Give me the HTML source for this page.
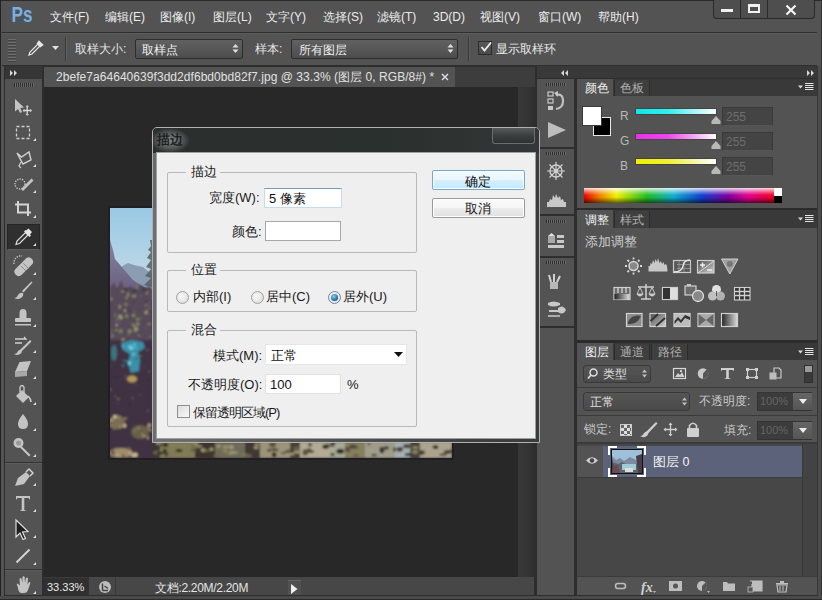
<!DOCTYPE html>
<html><head><meta charset="utf-8">
<style>
*{margin:0;padding:0;box-sizing:border-box}
html,body{width:822px;height:600px;overflow:hidden;background:#535353;font-family:"Liberation Sans",sans-serif;font-size:12px;color:#e8e8e8}
.a{position:absolute}
.t{position:absolute;white-space:nowrap;line-height:1}
</style></head><body>
<!-- window frame -->
<div class="a" style="left:0;top:0;width:822px;height:1px;background:#2a2a2a"></div>
<div class="a" style="left:0;top:0;width:1px;height:600px;background:#222"></div>
<div class="a" style="left:821px;top:0;width:1px;height:600px;background:#333"></div>
<div class="a" style="left:0;top:596px;width:822px;height:3px;background:#4a4a4a"></div><div class="a" style="left:0;top:599px;width:822px;height:1px;background:#2a2a2a"></div>

<div class="a" style="left:817px;top:66px;width:1px;height:530px;background:#353535"></div><div class="a" style="left:818px;top:66px;width:3px;height:530px;background:#4c4c4c"></div>
<!-- menu bar -->
<div class="a" style="left:1px;top:1px;width:816px;height:31px;background:#535353"></div>
<div class="a" style="left:2px;top:32px;width:815px;height:1px;background:#2e2e2e"></div>

<!-- options bar -->
<div class="a" style="left:2px;top:33px;width:815px;height:32px;background:#535353;border-top:1px solid #5d5d5d"></div>
<div class="a" style="left:2px;top:65px;width:815px;height:1px;background:#2e2e2e"></div>


<!-- menu content -->
<div class="a" style="left:11px;top:7px;width:22px;height:17px;background:#4c545c"></div>
<svg class="a" style="left:0;top:0" width="40" height="30" viewBox="0 0 40 30"><text x="11.5" y="22.2" font-family="Liberation Sans" font-size="22" font-weight="bold" fill="#7eaedb" textLength="21" lengthAdjust="spacingAndGlyphs">Ps</text></svg>
<div class="t" style="left:50px;top:11px;color:#ececec">文件(F)</div>
<div class="t" style="left:105px;top:11px;color:#ececec">编辑(E)</div>
<div class="t" style="left:160px;top:11px;color:#ececec">图像(I)</div>
<div class="t" style="left:213px;top:11px;color:#ececec">图层(L)</div>
<div class="t" style="left:266px;top:11px;color:#ececec">文字(Y)</div>
<div class="t" style="left:323px;top:11px;color:#ececec">选择(S)</div>
<div class="t" style="left:377px;top:11px;color:#ececec">滤镜(T)</div>
<div class="t" style="left:433px;top:11px;color:#ececec">3D(D)</div>
<div class="t" style="left:480px;top:11px;color:#ececec">视图(V)</div>
<div class="t" style="left:538px;top:11px;color:#ececec">窗口(W)</div>
<div class="t" style="left:598px;top:11px;color:#ececec">帮助(H)</div>
<!-- window buttons -->
<div class="a" style="left:713px;top:0;width:102px;height:19px;background:#4e4e4e;border:1px solid #2a2a2a;border-top:0;border-radius:0 0 4px 4px"></div>
<div class="a" style="left:740px;top:0;width:1px;height:18px;background:#2a2a2a"></div>
<div class="a" style="left:767px;top:0;width:1px;height:18px;background:#2a2a2a"></div>
<div class="a" style="left:721px;top:9px;width:12px;height:3px;background:#f0f0f0"></div>
<div class="a" style="left:748px;top:4px;width:12px;height:9px;border:2px solid #f0f0f0;border-top-width:3px"></div>
<svg class="a" style="left:783px;top:4px" width="16" height="12" viewBox="0 0 16 12"><path d="M3.5 1.5 L12.5 10.5 M12.5 1.5 L3.5 10.5" stroke="#f4f4f4" stroke-width="2.2"/></svg>

<!-- options content -->
<div class="a" style="left:8px;top:39px;width:8px;height:23px;background:repeating-linear-gradient(#6e6e6e 0 1px,#444 1px 2px,#535353 2px 3px)"></div>
<svg class="a" style="left:26px;top:38px" width="20" height="20" viewBox="0 0 20 20"><path d="M3 17 L4 14 L12 6 L14 8 L6 16 Z" fill="none" stroke="#e8e8e8" stroke-width="1.2"/><path d="M11 5 L15 9 M13 3.5 L16.5 7 L15 8 L12 5 Z" stroke="#e8e8e8" stroke-width="1.6" fill="#e8e8e8"/></svg>
<svg class="a" style="left:52px;top:46px" width="7" height="4" viewBox="0 0 7 4"><path d="M0 0 L7 0 L3.5 4Z" fill="#e0e0e0"/></svg>
<div class="a" style="left:65px;top:37px;width:1px;height:24px;background:#3a3a3a"></div>
<div class="a" style="left:66px;top:37px;width:1px;height:24px;background:#5e5e5e"></div>
<div class="t" style="left:75px;top:43px;color:#e4e4e4">取样大小:</div>
<div class="a" style="left:135px;top:39px;width:108px;height:20px;background:linear-gradient(#616161,#4d4d4d);border:1px solid #2d2d2d;border-radius:2px"></div>
<div class="t" style="left:142px;top:44px;color:#f0f0f0">取样点</div>
<svg class="a" style="left:232px;top:43px" width="7" height="11" viewBox="0 0 7 11"><path d="M0.5 4.5 L3.5 1 L6.5 4.5Z M0.5 6.5 L3.5 10 L6.5 6.5Z" fill="#e0e0e0"/></svg>
<div class="t" style="left:255px;top:43px;color:#e4e4e4">样本:</div>
<div class="a" style="left:291px;top:39px;width:167px;height:20px;background:linear-gradient(#616161,#4d4d4d);border:1px solid #2d2d2d;border-radius:2px"></div>
<div class="t" style="left:299px;top:44px;color:#f0f0f0">所有图层</div>
<svg class="a" style="left:447px;top:43px" width="7" height="11" viewBox="0 0 7 11"><path d="M0.5 4.5 L3.5 1 L6.5 4.5Z M0.5 6.5 L3.5 10 L6.5 6.5Z" fill="#e0e0e0"/></svg>
<div class="a" style="left:468px;top:37px;width:1px;height:24px;background:#3a3a3a"></div>
<div class="a" style="left:469px;top:37px;width:1px;height:24px;background:#5e5e5e"></div>
<div class="a" style="left:478px;top:41px;width:14px;height:14px;background:linear-gradient(#5a5a5a,#4a4a4a);border:1px solid #2d2d2d"></div>
<svg class="a" style="left:479px;top:40px" width="14" height="14" viewBox="0 0 14 14"><path d="M2.5 7 L5.5 10.5 L12 2.5" fill="none" stroke="#eeeeee" stroke-width="1.8"/></svg>
<div class="t" style="left:496px;top:43px;color:#e8e8e8">显示取样环</div>

<!-- main area bg -->
<div class="a" style="left:4px;top:66px;width:813px;height:530px;background:#2d2d2d"></div>

<!-- tools panel -->
<div class="a" style="left:5px;top:67px;width:37px;height:528px;background:#535353"></div>
<div class="a" style="left:5px;top:66px;width:37px;height:13px;background:#363636"></div>


<!-- tools content -->
<svg class="a" style="left:5px;top:67px;width:37px;height:12px" viewBox="0 0 37 12"><path d="M5 3 L8 6 L5 9Z M9 3 L12 6 L9 9Z" fill="#d8d8d8"/></svg>
<div class="a" style="left:14px;top:83px;width:20px;height:4px;background:repeating-linear-gradient(90deg,#2e2e2e 0 1px,#6a6a6a 1px 2px)"></div>
<div class="a" style="left:7px;top:224px;width:33px;height:26px;background:#2f2f2f;border:1px solid #262626;border-bottom-color:#5e5e5e"></div>
<div class="a" style="left:5px;top:462px;width:37px;height:1px;background:#333"></div>
<div class="a" style="left:5px;top:463px;width:37px;height:1px;background:#5d5d5d"></div>
<div class="a" style="left:5px;top:569px;width:37px;height:1px;background:#333"></div>
<div class="a" style="left:5px;top:570px;width:37px;height:1px;background:#5d5d5d"></div>
<svg class="a" style="left:0;top:0" width="50" height="600" viewBox="0 0 50 600">
<g fill="#c4c4c4" stroke="none">
<path d="M15 99 L15 111.5 L18 109 L20 113 L22 112 L20.3 108 L24 107.5Z"/>
<path d="M23 110.5 L31.5 110.5 M27.2 106 L27.2 115" stroke="#d8d8d8" stroke-width="1.3"/>
<path d="M25.5 107 L27.2 105 L29 107Z M25.5 114 L27.2 116 L29 114Z M24.5 108.8 L22.5 110.5 L24.5 112.2Z M30 108.8 L32 110.5 L30 112.2Z"/>
<rect x="16.5" y="126.5" width="13" height="12" fill="none" stroke="#d0d0d0" stroke-width="1.3" stroke-dasharray="3 2"/>
<path d="M17 153 L21.5 157 L29 152 L31 160 L23 164 L17 153Z" fill="none" stroke="#d0d0d0" stroke-width="1.4"/>
<path d="M21 162 L19 166 L21 168" fill="none" stroke="#d0d0d0" stroke-width="1.2"/>
<circle cx="20" cy="184" r="5" fill="none" stroke="#cfcfcf" stroke-width="1.3" stroke-dasharray="1.3 1.2"/>
<path d="M21 189 L31.5 178.5 L33.5 180.5 L23 191Z"/>
<path d="M18 201 L18 212.5 L31 212.5 M15 204.5 L28 204.5 L28 216" fill="none" stroke="#d4d4d4" stroke-width="2"/>
<path d="M16 244.5 L17 241 L25.5 232.5 L28 235 L19.5 243.5Z" fill="none" stroke="#e0e0e0" stroke-width="1.2"/>
<path d="M24 231.5 L29.5 237 L31 235.5 L30 234.5 L32 232 L28.5 228.5 L26 230.5 L25.5 230Z" fill="#e4e4e4"/>
<path d="M15.5 269 L26 258.5 Q29 256 32 259 Q34.5 262 32 264.5 L21.5 275 Q18.5 277.5 15.5 274.5 Q13 271.5 15.5 269Z"/><path d="M21 266 L26 271 M23.5 263.5 L28.5 268.5" stroke="#8a8a8a" stroke-width="1"/>
<path d="M14 264 A7 7 0 0 1 22 256" fill="none" stroke="#cfcfcf" stroke-width="1.3" stroke-dasharray="1.3 1.2"/>
<g transform="translate(0 2)"><path d="M22 289 L31.5 279.5 L32.5 280.5 L23.5 290.5Z"/>
<path d="M14 296 Q17 296 18 293 Q20 290 23 291 Q24 294 21 296 Q18 298 14 296Z"/></g>
<g transform="translate(0 6)"><rect x="15" y="312" width="16" height="4" rx="1"/>
<path d="M19.5 312 L19.5 307 Q19.5 303 23 303 Q26.5 303 26.5 307 L26.5 312Z"/>
<rect x="15" y="318" width="16" height="1.5"/></g>
<g transform="translate(0 1)"><path d="M19 350 L30 339 L31.5 340.5 L21 351Z"/>
<path d="M14 353 Q17 353 18 350 Q20 348 22 349 Q22 352 20 353 Q17 355 14 353Z"/>
<path d="M15 338 L26 338 L24 336 M15 342 L22 342" fill="none" stroke="#cfcfcf" stroke-width="1.3"/></g>
<path d="M15 372 L19.5 362 L31 361 L27 371Z"/>
<path d="M15 372 L27 371 L27 376 L15 377Z" fill="#a8a8a8"/>
<g transform="translate(0 2)"><path d="M16 394 L22 388 L29 395 L23 401Z"/>
<path d="M20 390 L20 385 Q22 382 24 385 L24 391" fill="none" stroke="#cfcfcf" stroke-width="1.3"/>
<path d="M28 394 Q31 397 31 400" fill="none" stroke="#cfcfcf" stroke-width="1.6"/></g>
<path d="M23 414 Q18 420 18 424 Q18 429 23 429 Q28 429 28 424 Q28 420 23 414Z"/>
<circle cx="18.5" cy="443" r="5"/>
<circle cx="18.5" cy="443" r="2.5" fill="#9a9a9a"/>
<path d="M21.5 446 L30.5 455 L29 456.5 L20 447.5Z"/>
<g transform="translate(0 2)"><path d="M15 484 L18 476 L26 470 L30 474 L24 482Z"/>
<path d="M26 470 L29 467 L33 471 L30 474" fill="none" stroke="#cfcfcf" stroke-width="1.5"/></g>
<path d="M16 496 L30 496 L30 500 L28.5 498 L24.3 498 L24.3 510 L26.5 511 L19.5 511 L21.7 510 L21.7 498 L17.5 498 L16 500Z"/>
<path d="M16 520 L16 537 L20 533 L23 539.5 L25.5 538.5 L22.5 532 L28 531.5Z" fill="#1e1e1e" stroke="#dcdcdc" stroke-width="1.2"/>
<path d="M16.5 562.5 L29.5 549.5" stroke="#d4d4d4" stroke-width="2"/>
<g transform="translate(0 2)"><path d="M17.5 584 Q16 582 17.5 581.5 L20 583.5 L19.5 577 Q20 575.5 21.5 576.5 L22.3 581 L22.5 575 Q23.5 573.5 24.7 575 L25 581 L26 576 Q27.3 575 28 576.5 L27.5 582.5 L29 580 Q30.5 579.5 30.3 581.3 L28 588 Q27 591 24 591 L21.5 591 Q19.5 591 18.5 588.5Z"/></g>
<path d="M33 141 L36 138 L36 141Z M33 167 L36 164 L36 167Z M33 193 L36 190 L36 193Z M33 218 L36 215 L36 218Z M33 246 L36 243 L36 246Z M33 275 L36 272 L36 275Z M33 300 L36 297 L36 300Z M33 327 L36 324 L36 327Z M33 353 L36 350 L36 353Z M33 379 L36 376 L36 379Z M33 405 L36 402 L36 405Z M33 431 L36 428 L36 431Z M33 457 L36 454 L36 457Z M33 486 L36 483 L36 486Z M33 512 L36 509 L36 512Z M33 538 L36 535 L36 538Z M33 565 L36 562 L36 565Z M33 594 L36 591 L36 594Z" fill="#e0e0e0"/>
</g>
</svg>

<!-- doc tab bar -->
<div class="a" style="left:44px;top:67px;width:491px;height:20px;background:#3d3d3d"></div>
<div class="a" style="left:44px;top:67px;width:411px;height:20px;background:#535353"></div>


<!-- doc tab content -->
<div class="t" style="left:56px;top:71px;color:#e0e0e0;letter-spacing:0.05px">2befe7a64640639f3dd2df6bd0bd82f7.jpg @ 33.3% (图层 0, RGB/8#) *</div>
<svg class="a" style="left:441px;top:73px" width="8" height="8" viewBox="0 0 8 8"><path d="M1 1 L7 7 M7 1 L1 7" stroke="#e0e0e0" stroke-width="1.4"/></svg>

<!-- canvas -->
<div class="a" style="left:44px;top:87px;width:474px;height:490px;background:#282828"></div>
<div class="a" style="left:518px;top:87px;width:16px;height:490px;background:linear-gradient(90deg,#383838,#333 70%,#2e2e2e)"></div>

<!-- status bar -->
<div class="a" style="left:44px;top:577px;width:490px;height:18px;background:#474747"></div>
<div class="a" style="left:44px;top:577px;width:44px;height:18px;background:#303030;border-top:1px solid #3a3a3a"></div>



<!-- photo -->
<div class="a" style="left:108px;top:206px;width:346px;height:254px;background:#1e2024"></div>
<svg class="a" style="left:110px;top:208px" width="342" height="250" viewBox="110 208 342 250">
<defs><linearGradient id="sky" x1="0" y1="0" x2="0" y2="1"><stop offset="0" stop-color="#9ac8e4"/><stop offset="1" stop-color="#c8dde8"/></linearGradient><linearGradient id="mtn" x1="0" y1="0" x2="0" y2="1"><stop offset="0" stop-color="#8384a0"/><stop offset="1" stop-color="#67587a"/></linearGradient><filter id="bl" x="-10%" y="-10%" width="120%" height="120%"><feGaussianBlur stdDeviation="1.1"/></filter><filter id="bl2" x="-5%" y="-30%" width="110%" height="160%"><feGaussianBlur stdDeviation="0.9"/></filter></defs>
<rect x="110" y="208" width="342" height="250" fill="#3f3242"/>
<rect x="110" y="208" width="42" height="90" fill="url(#sky)"/>
<path d="M118 270 L124 265 L128 263 L134 265 L143 267 L152 274 L152 300 L118 300Z" fill="#8b9db3"/>
<path d="M110 240 L113 250 L115 259 L121 266 L126 272 L133 280 L142 286 L152 290 L152 300 L110 300Z" fill="url(#mtn)"/>
<path d="M150 240 L151 246 L148 250 L151 252 L147 258 L151 260 L146 267 L151 269 L145 276 L151 278 L144 285 L152 287 L152 240Z" fill="#566060" opacity="0.85"/>
<g filter="url(#bl)">
<rect x="110" y="288" width="42" height="170" fill="#3f3242"/>
<path d="M110 300 L110 288 L114 282 L117 290 L121 280 L125 292 L130 286 L134 295 L140 284 L144 292 L148 286 L152 290 L152 340 L110 340Z" fill="#564a58"/>
<ellipse cx="116.8" cy="323.2" rx="1.2" ry="2.0" fill="#5e5468"/>
<ellipse cx="150.6" cy="311.6" rx="1.1" ry="1.5" fill="#4a4050"/>
<ellipse cx="142.3" cy="286.8" rx="1.4" ry="1.0" fill="#4a4050"/>
<ellipse cx="140.8" cy="335.8" rx="0.9" ry="2.2" fill="#5e5468"/>
<ellipse cx="140.3" cy="333.3" rx="1.4" ry="2.1" fill="#4a4050"/>
<ellipse cx="132.1" cy="323.5" rx="2.1" ry="1.3" fill="#5e5468"/>
<ellipse cx="116.3" cy="330.1" rx="1.9" ry="0.8" fill="#8a8a62"/>
<ellipse cx="116.6" cy="325.3" rx="1.5" ry="1.1" fill="#9a9870"/>
<ellipse cx="111.5" cy="332.8" rx="0.9" ry="1.1" fill="#7b7c5c"/>
<ellipse cx="137.6" cy="329.4" rx="1.9" ry="1.9" fill="#5e5468"/>
<ellipse cx="133.8" cy="325.4" rx="1.6" ry="1.6" fill="#8a8a62"/>
<ellipse cx="125.9" cy="304.4" rx="2.0" ry="1.4" fill="#7b7c5c"/>
<ellipse cx="125.0" cy="310.4" rx="1.2" ry="1.5" fill="#9a9870"/>
<ellipse cx="120.9" cy="331.0" rx="1.8" ry="2.2" fill="#7b7c5c"/>
<ellipse cx="130.3" cy="312.5" rx="1.6" ry="1.5" fill="#4a4050"/>
<ellipse cx="133.4" cy="303.2" rx="1.0" ry="1.7" fill="#4a4050"/>
<ellipse cx="135.7" cy="331.0" rx="1.3" ry="1.6" fill="#6f6a5a"/>
<ellipse cx="122.6" cy="291.6" rx="2.1" ry="1.0" fill="#8a8a62"/>
<ellipse cx="127.6" cy="294.6" rx="1.7" ry="2.1" fill="#8a8a62"/>
<ellipse cx="149.3" cy="308.0" rx="2.1" ry="1.6" fill="#7b7c5c"/>
<ellipse cx="146.2" cy="312.5" rx="1.7" ry="2.1" fill="#9a9870"/>
<ellipse cx="120.1" cy="316.3" rx="1.9" ry="1.9" fill="#9a9870"/>
<ellipse cx="129.8" cy="331.2" rx="2.0" ry="1.7" fill="#8a8a62"/>
<ellipse cx="111.4" cy="299.4" rx="0.9" ry="1.3" fill="#9a9870"/>
<ellipse cx="146.9" cy="339.1" rx="1.8" ry="0.9" fill="#5e5468"/>
<ellipse cx="115.7" cy="321.1" rx="1.5" ry="2.1" fill="#5e5468"/>
<ellipse cx="146.9" cy="305.7" rx="2.0" ry="1.6" fill="#7b7c5c"/>
<ellipse cx="127.5" cy="317.4" rx="1.5" ry="1.0" fill="#6a6a50"/>
<ellipse cx="134.1" cy="293.5" rx="0.8" ry="1.8" fill="#5e5468"/>
<ellipse cx="149.1" cy="287.3" rx="1.3" ry="1.1" fill="#4a4050"/>
<ellipse cx="149.2" cy="308.7" rx="1.4" ry="2.1" fill="#5e5468"/>
<ellipse cx="147.1" cy="293.2" rx="1.4" ry="1.1" fill="#8a8a62"/>
<ellipse cx="136.3" cy="328.5" rx="2.0" ry="1.7" fill="#8a8a62"/>
<ellipse cx="115.2" cy="315.1" rx="1.4" ry="2.0" fill="#6f6a5a"/>
<ellipse cx="135.5" cy="295.8" rx="1.3" ry="1.8" fill="#6a6a50"/>
<ellipse cx="132.6" cy="288.5" rx="1.5" ry="1.8" fill="#5e5468"/>
<ellipse cx="112.3" cy="336.2" rx="1.4" ry="0.9" fill="#9a9870"/>
<ellipse cx="141.3" cy="295.5" rx="1.1" ry="2.1" fill="#5e5468"/>
<ellipse cx="134.8" cy="326.3" rx="1.3" ry="1.2" fill="#7b7c5c"/>
<ellipse cx="146.9" cy="301.9" rx="1.9" ry="1.5" fill="#4a4050"/>
<ellipse cx="133.5" cy="315.5" rx="1.5" ry="1.8" fill="#8a8a62"/>
<ellipse cx="149.7" cy="302.7" rx="1.7" ry="1.9" fill="#5e5468"/>
<ellipse cx="117.8" cy="319.3" rx="2.2" ry="1.3" fill="#6f6a5a"/>
<ellipse cx="123.0" cy="339.6" rx="2.0" ry="1.7" fill="#8a8a62"/>
<ellipse cx="135.7" cy="329.6" rx="1.5" ry="2.1" fill="#9a9870"/>
<ellipse cx="137.9" cy="324.1" rx="1.5" ry="1.3" fill="#9a9870"/>
<ellipse cx="126.5" cy="298.2" rx="1.7" ry="0.9" fill="#8a8a62"/>
<ellipse cx="121.3" cy="317.8" rx="1.8" ry="1.4" fill="#9a9870"/>
<ellipse cx="119.7" cy="306.8" rx="1.1" ry="2.1" fill="#9a9870"/>
<ellipse cx="136.8" cy="288.0" rx="1.5" ry="1.8" fill="#7b7c5c"/>
<ellipse cx="146.5" cy="328.1" rx="1.7" ry="1.7" fill="#5e5468"/>
<ellipse cx="140.0" cy="318.7" rx="1.8" ry="1.1" fill="#6a6a50"/>
<ellipse cx="147.6" cy="306.8" rx="1.3" ry="1.5" fill="#4a4050"/>
<ellipse cx="139.2" cy="335.1" rx="1.2" ry="1.2" fill="#7b7c5c"/>
<ellipse cx="126.0" cy="293.9" rx="1.0" ry="1.5" fill="#4a4050"/>
<ellipse cx="135.4" cy="306.3" rx="1.4" ry="1.0" fill="#5e5468"/>
<ellipse cx="149.2" cy="324.0" rx="1.8" ry="1.3" fill="#7b7c5c"/>
<ellipse cx="133.8" cy="296.2" rx="2.1" ry="1.3" fill="#8a8a62"/>
<ellipse cx="120.4" cy="331.7" rx="2.1" ry="1.5" fill="#7b7c5c"/>
<ellipse cx="119.8" cy="323.2" rx="1.3" ry="2.1" fill="#5e5468"/>
<ellipse cx="129.1" cy="309.6" rx="1.7" ry="1.7" fill="#4a4050"/>
<ellipse cx="137.4" cy="319.6" rx="1.1" ry="2.1" fill="#8a8a62"/>
<ellipse cx="111.4" cy="329.8" rx="1.8" ry="0.8" fill="#6a6a50"/>
<ellipse cx="130.5" cy="288.1" rx="1.4" ry="1.4" fill="#4a4050"/>
<ellipse cx="150.6" cy="336.8" rx="0.9" ry="1.2" fill="#7b7c5c"/>
<ellipse cx="128.6" cy="334.3" rx="1.0" ry="1.6" fill="#6f6a5a"/>
<ellipse cx="147.4" cy="309.3" rx="0.9" ry="1.1" fill="#6a6a50"/>
<ellipse cx="126.5" cy="315.8" rx="1.6" ry="2.0" fill="#7b7c5c"/>
<ellipse cx="134.0" cy="311.3" rx="0.8" ry="1.6" fill="#6a6a50"/>
<ellipse cx="113.3" cy="334.6" rx="2.2" ry="1.7" fill="#5e5468"/>
<ellipse cx="116.2" cy="377.3" rx="1.1" ry="1.4" fill="#352a38"/>
<ellipse cx="123.9" cy="360.2" rx="0.9" ry="1.2" fill="#6a6458"/>
<ellipse cx="110.4" cy="400.5" rx="0.8" ry="0.7" fill="#4e4252"/>
<ellipse cx="144.0" cy="367.0" rx="0.7" ry="0.6" fill="#6a6458"/>
<ellipse cx="130.3" cy="391.1" rx="0.8" ry="0.7" fill="#352a38"/>
<ellipse cx="148.2" cy="380.4" rx="0.8" ry="0.8" fill="#352a38"/>
<ellipse cx="149.1" cy="371.8" rx="1.4" ry="0.8" fill="#6a6458"/>
<ellipse cx="111.7" cy="366.4" rx="0.6" ry="1.0" fill="#5a4e5e"/>
<ellipse cx="129.6" cy="404.8" rx="1.4" ry="1.5" fill="#352a38"/>
<ellipse cx="137.9" cy="356.3" rx="1.6" ry="1.0" fill="#4e4252"/>
<ellipse cx="148.6" cy="410.3" rx="0.6" ry="1.0" fill="#6a6458"/>
<ellipse cx="135.2" cy="385.5" rx="1.2" ry="0.8" fill="#352a38"/>
<ellipse cx="148.2" cy="380.2" rx="0.8" ry="1.6" fill="#352a38"/>
<ellipse cx="132.7" cy="398.2" rx="1.5" ry="0.8" fill="#6a6458"/>
<ellipse cx="134.6" cy="366.4" rx="1.2" ry="1.6" fill="#6a6458"/>
<ellipse cx="147.4" cy="411.6" rx="1.6" ry="1.3" fill="#4e4252"/>
<ellipse cx="140.4" cy="356.0" rx="1.5" ry="1.1" fill="#6a6458"/>
<ellipse cx="115.0" cy="358.0" rx="1.2" ry="1.1" fill="#352a38"/>
<ellipse cx="130.3" cy="354.3" rx="0.9" ry="1.0" fill="#5a4e5e"/>
<ellipse cx="125.5" cy="376.7" rx="0.6" ry="1.5" fill="#6a6458"/>
<ellipse cx="118.4" cy="399.2" rx="1.2" ry="1.4" fill="#6a6458"/>
<ellipse cx="140.2" cy="394.8" rx="1.0" ry="1.0" fill="#5a4e5e"/>
<ellipse cx="110.2" cy="389.8" rx="1.2" ry="1.6" fill="#6a6458"/>
<ellipse cx="118.1" cy="357.0" rx="1.3" ry="0.6" fill="#352a38"/>
<ellipse cx="147.6" cy="349.9" rx="1.1" ry="1.0" fill="#6a6458"/>
<ellipse cx="135.8" cy="384.9" rx="1.5" ry="1.4" fill="#4e4252"/>
<ellipse cx="125.4" cy="358.8" rx="1.4" ry="1.5" fill="#352a38"/>
<ellipse cx="118.2" cy="403.6" rx="1.3" ry="0.8" fill="#4e4252"/>
<ellipse cx="115.3" cy="396.4" rx="0.7" ry="1.2" fill="#6a6458"/>
<ellipse cx="136.5" cy="378.5" rx="1.1" ry="1.3" fill="#5a4e5e"/>
<path d="M121 343 L132 340 L143 342 L145 348 L138 352 L140 360 L139 371 L131 373 L128 364 L130 354 L123 350Z" fill="#3b8fa8"/>
<ellipse cx="127.1" cy="361.2" rx="2.1" ry="1.5" fill="#2f7a94"/>
<ellipse cx="123.2" cy="365.6" rx="0.9" ry="1.8" fill="#2f7a94"/>
<ellipse cx="130.9" cy="345.5" rx="1.7" ry="0.8" fill="#7ad0e4"/>
<ellipse cx="136.8" cy="358.7" rx="1.5" ry="1.6" fill="#2f7a94"/>
<ellipse cx="133.4" cy="354.1" rx="1.7" ry="1.3" fill="#5cc0dc"/>
<ellipse cx="129.6" cy="363.1" rx="1.7" ry="1.8" fill="#7ad0e4"/>
<ellipse cx="134.1" cy="354.3" rx="0.8" ry="1.7" fill="#5cc0dc"/>
<ellipse cx="131.6" cy="348.2" rx="2.1" ry="1.8" fill="#7ad0e4"/>
<ellipse cx="129.6" cy="346.3" rx="1.9" ry="1.3" fill="#5cc0dc"/>
<ellipse cx="129.2" cy="348.0" rx="1.4" ry="1.1" fill="#5cc0dc"/>
<ellipse cx="123.2" cy="346.4" rx="1.1" ry="1.0" fill="#5cc0dc"/>
<ellipse cx="133.2" cy="345.2" rx="1.0" ry="1.0" fill="#2f7a94"/>
<ellipse cx="136.3" cy="347.8" rx="0.9" ry="1.1" fill="#5cc0dc"/>
<ellipse cx="134.4" cy="344.7" rx="1.4" ry="1.9" fill="#5cc0dc"/>
<ellipse cx="114" cy="353" rx="3" ry="8" fill="#3a7580"/>
<ellipse cx="132" cy="379" rx="5" ry="3.5" fill="#b09858"/>
<ellipse cx="117" cy="422" rx="8" ry="7" fill="#7a6c54"/>
<ellipse cx="124.9" cy="425.5" rx="1.3" ry="2.0" fill="#c0b088"/>
<ellipse cx="122.9" cy="425.3" rx="0.8" ry="1.4" fill="#9a8a66"/>
<ellipse cx="124.3" cy="426.6" rx="1.4" ry="0.8" fill="#d4c49a"/>
<ellipse cx="120.2" cy="426.7" rx="1.7" ry="1.7" fill="#9a8a66"/>
<ellipse cx="118.5" cy="417.5" rx="1.2" ry="1.4" fill="#9a8a66"/>
<ellipse cx="114.2" cy="428.7" rx="0.9" ry="1.1" fill="#9a8a66"/>
<ellipse cx="111.4" cy="419.9" rx="1.7" ry="1.0" fill="#c0b088"/>
<ellipse cx="114.9" cy="416.7" rx="1.6" ry="1.9" fill="#d4c49a"/>
<ellipse cx="110.8" cy="426.2" rx="1.4" ry="0.9" fill="#9a8a66"/>
<ellipse cx="125.6" cy="418.3" rx="1.7" ry="0.9" fill="#9a8a66"/>
<ellipse cx="140" cy="432" rx="9" ry="7" fill="#6a5e4a"/>
<ellipse cx="142.5" cy="434.1" rx="1.0" ry="1.9" fill="#8a7c60"/>
<ellipse cx="138.5" cy="428.0" rx="1.1" ry="1.0" fill="#a8987a"/>
<ellipse cx="149.3" cy="425.2" rx="1.8" ry="2.0" fill="#a8987a"/>
<ellipse cx="135.0" cy="430.3" rx="1.0" ry="1.6" fill="#8a7c60"/>
<ellipse cx="148.0" cy="427.7" rx="1.4" ry="1.2" fill="#8a7c60"/>
<ellipse cx="147.8" cy="437.7" rx="1.1" ry="1.7" fill="#a8987a"/>
<ellipse cx="143.9" cy="436.0" rx="1.9" ry="1.1" fill="#a8987a"/>
<ellipse cx="149.9" cy="429.9" rx="1.8" ry="1.7" fill="#8a7c60"/>
<ellipse cx="121" cy="453" rx="12" ry="5" fill="#a08c6a"/>
<ellipse cx="128.8" cy="448.3" rx="2.4" ry="1.3" fill="#6a5a48"/>
<ellipse cx="135.6" cy="454.9" rx="2.2" ry="2.3" fill="#c8b890"/>
<ellipse cx="133.2" cy="455.4" rx="1.7" ry="2.1" fill="#c8b890"/>
<ellipse cx="123.4" cy="456.7" rx="1.6" ry="2.4" fill="#6a5a48"/>
<ellipse cx="130.0" cy="452.7" rx="1.2" ry="1.0" fill="#c8b890"/>
<ellipse cx="112.4" cy="452.1" rx="1.1" ry="2.0" fill="#6a5a48"/>
<ellipse cx="112.9" cy="452.6" rx="2.0" ry="2.3" fill="#6a5a48"/>
<ellipse cx="117.6" cy="454.9" rx="1.4" ry="1.0" fill="#c8b890"/>
</g>
<g filter="url(#bl2)">
<rect x="152" y="442" width="8" height="16" fill="#3e3630"/>
<rect x="160" y="442" width="35" height="16" fill="#807c54"/>
<rect x="195" y="442" width="20" height="16" fill="#3e342c"/>
<rect x="215" y="442" width="30" height="16" fill="#6e6c58"/>
<rect x="245" y="442" width="15" height="16" fill="#403830"/>
<rect x="260" y="442" width="30" height="16" fill="#9c9478"/>
<rect x="290" y="442" width="10" height="16" fill="#4a4034"/>
<rect x="300" y="442" width="30" height="16" fill="#b2aa92"/>
<rect x="330" y="442" width="15" height="16" fill="#a4aa94"/>
<rect x="345" y="442" width="20" height="16" fill="#847f5c"/>
<rect x="365" y="442" width="30" height="16" fill="#a09c8a"/>
<rect x="395" y="442" width="15" height="16" fill="#a6b0b2"/>
<rect x="410" y="442" width="10" height="16" fill="#4a4238"/>
<rect x="420" y="442" width="32" height="16" fill="#aca48c"/>
<ellipse cx="157.0" cy="452.6" rx="3.9" ry="2.1" fill="#6a6450"/>
<ellipse cx="159.4" cy="443.4" rx="3.4" ry="1.4" fill="#a09a78"/>
<ellipse cx="161.8" cy="445.0" rx="2.7" ry="1.4" fill="#4a4034"/>
<ellipse cx="179.0" cy="450.5" rx="3.3" ry="1.6" fill="#2e2824"/>
<ellipse cx="166.4" cy="454.3" rx="1.9" ry="2.2" fill="#4a4034"/>
<ellipse cx="164.9" cy="451.0" rx="1.8" ry="2.5" fill="#2e2824"/>
<ellipse cx="160.2" cy="453.1" rx="3.7" ry="1.4" fill="#2e2824"/>
<ellipse cx="193.7" cy="450.0" rx="3.1" ry="1.3" fill="#5a5040"/>
<ellipse cx="193.9" cy="445.6" rx="2.2" ry="1.5" fill="#4a4034"/>
<ellipse cx="165.8" cy="444.9" rx="2.3" ry="2.2" fill="#2e2824"/>
<ellipse cx="206.7" cy="450.7" rx="2.3" ry="1.5" fill="#6a6450"/>
<ellipse cx="211.4" cy="449.2" rx="2.0" ry="1.7" fill="#a09a78"/>
<ellipse cx="198.5" cy="446.3" rx="3.9" ry="1.5" fill="#8a8460"/>
<ellipse cx="203.1" cy="450.1" rx="2.4" ry="1.9" fill="#a09a78"/>
<ellipse cx="195.2" cy="443.6" rx="3.1" ry="2.4" fill="#8a8460"/>
<ellipse cx="218.6" cy="446.2" rx="2.4" ry="1.5" fill="#a09a78"/>
<ellipse cx="230.7" cy="453.1" rx="3.0" ry="2.2" fill="#8a8460"/>
<ellipse cx="226.0" cy="446.8" rx="3.9" ry="1.1" fill="#a09a78"/>
<ellipse cx="225.2" cy="450.9" rx="2.3" ry="2.4" fill="#8a8460"/>
<ellipse cx="231.4" cy="447.1" rx="2.3" ry="2.2" fill="#a09a78"/>
<ellipse cx="233.8" cy="452.4" rx="4.0" ry="1.2" fill="#a09a78"/>
<ellipse cx="216.5" cy="455.8" rx="3.8" ry="1.0" fill="#6a6450"/>
<ellipse cx="256.1" cy="447.5" rx="2.6" ry="1.6" fill="#a09a78"/>
<ellipse cx="245.8" cy="454.9" rx="3.5" ry="1.5" fill="#8a8460"/>
<ellipse cx="248.1" cy="455.8" rx="3.9" ry="1.9" fill="#6a6450"/>
<ellipse cx="256.8" cy="444.4" rx="2.4" ry="1.1" fill="#a09a78"/>
<ellipse cx="272.6" cy="444.8" rx="3.6" ry="2.5" fill="#5a5040"/>
<ellipse cx="273.6" cy="449.3" rx="2.3" ry="1.4" fill="#5a5040"/>
<ellipse cx="274.1" cy="454.7" rx="2.4" ry="2.5" fill="#2e2824"/>
<ellipse cx="288.8" cy="451.2" rx="3.7" ry="1.3" fill="#4a4034"/>
<ellipse cx="274.8" cy="449.7" rx="3.7" ry="1.5" fill="#5a5040"/>
<ellipse cx="283.6" cy="453.1" rx="3.0" ry="1.1" fill="#5a5040"/>
<ellipse cx="269.2" cy="450.3" rx="2.2" ry="1.7" fill="#5a5040"/>
<ellipse cx="297.7" cy="452.0" rx="3.9" ry="1.5" fill="#a09a78"/>
<ellipse cx="291.8" cy="454.1" rx="2.9" ry="1.4" fill="#a09a78"/>
<ellipse cx="296.7" cy="449.0" rx="3.1" ry="2.2" fill="#6a6450"/>
<ellipse cx="310.4" cy="451.4" rx="3.8" ry="1.6" fill="#5a5040"/>
<ellipse cx="327.7" cy="445.2" rx="2.6" ry="1.5" fill="#5a5040"/>
<ellipse cx="310.0" cy="444.8" rx="2.0" ry="1.5" fill="#2e2824"/>
<ellipse cx="325.6" cy="446.7" rx="3.3" ry="2.1" fill="#2e2824"/>
<ellipse cx="305.2" cy="453.1" rx="2.8" ry="2.4" fill="#5a5040"/>
<ellipse cx="309.1" cy="450.2" rx="2.2" ry="2.5" fill="#5a5040"/>
<ellipse cx="305.9" cy="450.6" rx="3.1" ry="1.3" fill="#5a5040"/>
<ellipse cx="340.3" cy="451.2" rx="4.0" ry="2.5" fill="#2e2824"/>
<ellipse cx="332.5" cy="454.6" rx="2.3" ry="1.3" fill="#2e2824"/>
<ellipse cx="332.9" cy="443.5" rx="2.4" ry="2.0" fill="#4a4034"/>
<ellipse cx="331.1" cy="445.7" rx="3.8" ry="1.0" fill="#5a5040"/>
<ellipse cx="353.1" cy="446.6" rx="3.7" ry="2.0" fill="#4a4034"/>
<ellipse cx="355.9" cy="455.5" rx="3.0" ry="1.1" fill="#5a5040"/>
<ellipse cx="355.9" cy="447.4" rx="2.2" ry="1.5" fill="#5a5040"/>
<ellipse cx="347.6" cy="448.3" rx="3.1" ry="1.6" fill="#5a5040"/>
<ellipse cx="347.8" cy="450.7" rx="2.7" ry="1.3" fill="#5a5040"/>
<ellipse cx="369.0" cy="444.2" rx="1.5" ry="1.2" fill="#5a5040"/>
<ellipse cx="382.0" cy="451.0" rx="2.3" ry="2.3" fill="#2e2824"/>
<ellipse cx="381.9" cy="448.6" rx="2.7" ry="1.7" fill="#2e2824"/>
<ellipse cx="386.2" cy="448.0" rx="3.0" ry="1.4" fill="#2e2824"/>
<ellipse cx="394.4" cy="449.5" rx="1.5" ry="2.4" fill="#4a4034"/>
<ellipse cx="374.2" cy="455.1" rx="2.7" ry="1.2" fill="#2e2824"/>
<ellipse cx="383.7" cy="448.8" rx="1.6" ry="1.2" fill="#4a4034"/>
<ellipse cx="400.9" cy="449.2" rx="2.2" ry="2.4" fill="#5a5040"/>
<ellipse cx="406.7" cy="446.2" rx="3.6" ry="2.1" fill="#4a4034"/>
<ellipse cx="399.3" cy="449.4" rx="2.8" ry="2.3" fill="#4a4034"/>
<ellipse cx="408.2" cy="454.6" rx="3.4" ry="1.5" fill="#2e2824"/>
<ellipse cx="415.3" cy="447.4" rx="3.3" ry="1.0" fill="#a09a78"/>
<ellipse cx="413.5" cy="451.9" rx="1.8" ry="1.0" fill="#6a6450"/>
<ellipse cx="415.5" cy="451.9" rx="3.7" ry="1.8" fill="#8a8460"/>
<ellipse cx="420.5" cy="453.1" rx="3.0" ry="2.0" fill="#4a4034"/>
<ellipse cx="450.5" cy="451.4" rx="2.7" ry="2.0" fill="#4a4034"/>
<ellipse cx="443.0" cy="454.7" rx="3.6" ry="1.1" fill="#4a4034"/>
<ellipse cx="446.8" cy="452.0" rx="3.0" ry="2.0" fill="#4a4034"/>
<ellipse cx="435.1" cy="447.0" rx="2.7" ry="1.8" fill="#2e2824"/>
<ellipse cx="435.9" cy="447.3" rx="2.6" ry="1.8" fill="#2e2824"/>
<ellipse cx="421.6" cy="452.5" rx="3.5" ry="2.2" fill="#4a4034"/>
</g>
</svg>
<!-- status content -->
<div class="t" style="left:47px;top:582px;font-size:11px;color:#e8e8e8">33.33%</div>
<div class="a" style="left:88px;top:577px;width:1px;height:18px;background:#333"></div>
<svg class="a" style="left:98px;top:580px" width="14" height="14" viewBox="0 0 14 14"><circle cx="7" cy="7" r="6" fill="#bcbcbc"/><path d="M4.5 3.5 L4.5 10.5 M4.5 10.5 L10 10.5 M6.5 6 L10 8.5" stroke="#444" stroke-width="1.5" fill="none"/></svg>
<div class="a" style="left:115px;top:577px;width:1px;height:18px;background:#393939"></div>
<div class="t" style="left:155px;top:582px;font-size:12px;color:#e4e4e4;letter-spacing:-0.3px">文档:2.20M/2.20M</div>
<div class="a" style="left:288px;top:580px;width:13px;height:15px;background:#505050;border-top:1px solid #636363"></div>
<svg class="a" style="left:290px;top:583px" width="10" height="12" viewBox="0 0 10 12"><path d="M1 1 L7.5 6 L1 11Z" fill="#f0f0f0"/></svg>

<!-- icon column -->
<div class="a" style="left:537px;top:67px;width:37px;height:528px;background:#535353"></div>
<div class="a" style="left:537px;top:66px;width:280px;height:13px;background:#393939;border-bottom:1px solid #2c2c2c"></div>

<!-- right panels -->
<div class="a" style="left:577px;top:79px;width:240px;height:516px;background:#535353"></div>


<!-- icon column content -->
<div class="a" style="left:536px;top:79px;width:1px;height:516px;background:#2e2e2e"></div>
<div class="a" style="left:574px;top:79px;width:3px;height:516px;background:#2e2e2e"></div>
<svg class="a" style="left:558px;top:67px" width="12" height="12" viewBox="0 0 12 12"><path d="M6 3 L3 6 L6 9Z M10 3 L7 6 L10 9Z" fill="#d8d8d8"/></svg>
<svg class="a" style="left:805px;top:67px" width="12" height="12" viewBox="0 0 12 12"><path d="M2 3 L5 6 L2 9Z M6 3 L9 6 L6 9Z" fill="#d8d8d8"/></svg>
<div class="a" style="left:537px;top:147px;width:37px;height:2px;background:#2e2e2e"></div>
<div class="a" style="left:537px;top:214px;width:37px;height:2px;background:#2e2e2e"></div>
<div class="a" style="left:537px;top:256px;width:37px;height:2px;background:#2e2e2e"></div>
<div class="a" style="left:537px;top:326px;width:37px;height:2px;background:#2e2e2e"></div>
<div class="a" style="left:546px;top:83px;width:20px;height:3px;background:repeating-linear-gradient(90deg,#2e2e2e 0 1px,#6a6a6a 1px 2px)"></div>
<div class="a" style="left:546px;top:152px;width:20px;height:3px;background:repeating-linear-gradient(90deg,#2e2e2e 0 1px,#6a6a6a 1px 2px)"></div>
<div class="a" style="left:546px;top:220px;width:20px;height:3px;background:repeating-linear-gradient(90deg,#2e2e2e 0 1px,#6a6a6a 1px 2px)"></div>
<div class="a" style="left:546px;top:261px;width:20px;height:3px;background:repeating-linear-gradient(90deg,#2e2e2e 0 1px,#6a6a6a 1px 2px)"></div>
<svg class="a" style="left:537px;top:79px" width="37" height="260" viewBox="537 79 37 260">
<g fill="#c8c8c8">
<rect x="548" y="92" width="5" height="4" fill="none" stroke="#c8c8c8" stroke-width="1.2"/>
<rect x="548" y="99" width="5" height="4" fill="none" stroke="#c8c8c8" stroke-width="1.2"/>
<rect x="548" y="106" width="5" height="4"/>
<path d="M556 95 Q563 93 563 101 Q563 108 556 109" fill="none" stroke="#c0c0c0" stroke-width="2.2"/>
<path d="M554 93 L558 91 L558 97Z"/>
<path d="M548 122 L566 130 L548 138Z" fill="#bdbdbd"/>
<circle cx="556" cy="171" r="6" fill="none" stroke="#d0d0d0" stroke-width="1.4"/>
<path d="M556 162 L556 180 M547 171 L565 171 M549.5 164.5 L562.5 177.5 M562.5 164.5 L549.5 177.5" stroke="#d0d0d0" stroke-width="1.2"/>
<circle cx="556" cy="171" r="2" fill="#d0d0d0"/>
<g transform="translate(0 3)"><path d="M547 204 L547 199 L549 199 L550 196 L552 197 L553 192 L555 195 L556 191 L558 195 L560 193 L561 197 L563 196 L564 199 L566 199 L566 204Z"/></g>
<g transform="translate(0 2)"><rect x="548" y="234" width="7" height="7" fill="#a8a8a8"/>
<path d="M548 234 L551.5 231 L555 234Z" fill="#dedede"/>
<rect x="557" y="233" width="7" height="3"/>
<rect x="557" y="238" width="7" height="3"/>
<rect x="548" y="243" width="16" height="3"/></g>
<g transform="translate(0 4)"><rect x="550" y="278" width="8" height="7" fill="#b8b8b8"/>
<path d="M551 278 L549 271 M554 278 L554 270 M557 278 L560 272" stroke="#d0d0d0" stroke-width="2"/></g>
<g transform="translate(0 1)"><path d="M548 302 Q553 299 560 302 L560 304 Q553 307 548 304Z"/>
<path d="M549 310 L562 310" stroke="#c8c8c8" stroke-width="2"/>
<path d="M558 307 Q563 303 566 309 Q563 315 558 311Z"/>
<path d="M548 315 L560 315" stroke="#c8c8c8" stroke-width="1.5"/></g>
</g>
</svg>

<!-- color panel -->
<div class="a" style="left:577px;top:79px;width:240px;height:17px;background:#393939"></div>
<div class="a" style="left:577px;top:79px;width:36px;height:17px;background:#535353"></div>
<div class="a" style="left:614px;top:80px;width:36px;height:16px;background:#3f3f3f;border-right:1px solid #2c2c2c;border-left:1px solid #2c2c2c"></div>
<div class="t" style="left:585px;top:82px;color:#f0f0f0">颜色</div>
<div class="t" style="left:620px;top:82px;color:#b0b0b0">色板</div>
<svg class="a" style="left:798px;top:82px" width="17" height="10" viewBox="0 0 17 10"><path d="M0 3.5 L5 3.5 L2.5 6.5Z" fill="#d8d8d8"/><path d="M7 1.5 L15.5 1.5 M7 3.5 L15.5 3.5 M7 5.5 L15.5 5.5 M7 7.5 L15.5 7.5" stroke="#e4e4e4" stroke-width="1"/></svg>
<div class="a" style="left:593px;top:117px;width:18px;height:19px;background:#000;border:1px solid #e8e8e8"></div>
<div class="a" style="left:582px;top:106px;width:20px;height:20px;background:#fff;border:1px solid #383838"></div>
<div class="t" style="left:620px;top:110px;color:#b8b8b8">R</div>
<div class="t" style="left:620px;top:135px;color:#b8b8b8">G</div>
<div class="t" style="left:620px;top:160px;color:#b8b8b8">B</div>
<div class="a" style="left:635px;top:108px;width:82px;height:7px;border:1px solid #444;background:linear-gradient(90deg,#10e8e8,#30eeee 40%,#b0f6f6 75%,#ffffff)"></div>
<div class="a" style="left:635px;top:133px;width:82px;height:7px;border:1px solid #444;background:linear-gradient(90deg,#e830e8,#ec48ec 40%,#f4b0f4 75%,#ffffff)"></div>
<div class="a" style="left:635px;top:158px;width:82px;height:7px;border:1px solid #444;background:linear-gradient(90deg,#f0f000,#f0f030 40%,#f6f6b0 75%,#ffffff)"></div>
<svg class="a" style="left:710px;top:115px" width="12" height="62" viewBox="0 0 12 62"><g fill="#b8b8b8"><path d="M6 1 L10.5 6 L10.5 9 L1.5 9 L1.5 6Z"/><path d="M6 26 L10.5 31 L10.5 34 L1.5 34 L1.5 31Z"/><path d="M6 51 L10.5 56 L10.5 59 L1.5 59 L1.5 56Z"/></g></svg>
<div class="a" style="left:722px;top:107px;width:51px;height:19px;background:#444;border:1px solid #3a3a3a;border-bottom-color:#565656"></div>
<div class="a" style="left:722px;top:132px;width:51px;height:19px;background:#444;border:1px solid #3a3a3a;border-bottom-color:#565656"></div>
<div class="a" style="left:722px;top:157px;width:51px;height:19px;background:#444;border:1px solid #3a3a3a;border-bottom-color:#565656"></div>
<div class="t" style="left:726px;top:111px;color:#6e6e6e">255</div>
<div class="t" style="left:726px;top:136px;color:#6e6e6e">255</div>
<div class="t" style="left:726px;top:161px;color:#6e6e6e">255</div>
<div class="a" style="left:584px;top:188px;width:190px;height:15px;background:linear-gradient(rgba(255,255,255,0.85),rgba(255,255,255,0.2) 35%,rgba(255,255,255,0) 50%,rgba(0,0,0,0) 60%,rgba(0,0,0,0.6)),linear-gradient(90deg,#f00000,#f08000 8%,#f0f000 17%,#20c020 33%,#10b0d0 47%,#1040d0 62%,#8000a0 76%,#e00090 86%,#f00020 100%)"></div>
<div class="a" style="left:774px;top:188px;width:8px;height:8px;background:#fff"></div>
<div class="a" style="left:774px;top:196px;width:8px;height:7px;background:#000"></div>
<div class="a" style="left:577px;top:208px;width:240px;height:2px;background:#2b2b2b"></div>

<!-- adjustments panel -->
<div class="a" style="left:577px;top:210px;width:240px;height:18px;background:#393939"></div>
<div class="a" style="left:577px;top:210px;width:36px;height:18px;background:#535353"></div>
<div class="a" style="left:614px;top:211px;width:36px;height:17px;background:#3f3f3f;border-right:1px solid #2c2c2c;border-left:1px solid #2c2c2c"></div>
<div class="t" style="left:585px;top:214px;color:#f0f0f0">调整</div>
<div class="t" style="left:620px;top:214px;color:#b0b0b0">样式</div>
<svg class="a" style="left:798px;top:214px" width="17" height="10" viewBox="0 0 17 10"><path d="M0 3.5 L5 3.5 L2.5 6.5Z" fill="#d8d8d8"/><path d="M7 1.5 L15.5 1.5 M7 3.5 L15.5 3.5 M7 5.5 L15.5 5.5 M7 7.5 L15.5 7.5" stroke="#e4e4e4" stroke-width="1"/></svg>
<div class="t" style="left:585px;top:235px;font-size:13px;color:#cccccc">添加调整</div>
<div class="a" style="left:577px;top:340px;width:240px;height:3px;background:#2b2b2b"></div>

<!-- layers panel -->
<div class="a" style="left:577px;top:343px;width:240px;height:17px;background:#393939"></div>
<div class="a" style="left:577px;top:343px;width:36px;height:17px;background:#535353"></div>
<div class="a" style="left:614px;top:344px;width:36px;height:16px;background:#3f3f3f;border-right:1px solid #2c2c2c;border-left:1px solid #2c2c2c"></div>
<div class="a" style="left:651px;top:344px;width:37px;height:16px;background:#3f3f3f;border-right:1px solid #2c2c2c;border-left:1px solid #2c2c2c"></div>
<div class="t" style="left:585px;top:346px;color:#f0f0f0">图层</div>
<div class="t" style="left:620px;top:346px;color:#b0b0b0">通道</div>
<div class="t" style="left:658px;top:346px;color:#b0b0b0">路径</div>
<svg class="a" style="left:798px;top:347px" width="17" height="10" viewBox="0 0 17 10"><path d="M0 3.5 L5 3.5 L2.5 6.5Z" fill="#d8d8d8"/><path d="M7 1.5 L15.5 1.5 M7 3.5 L15.5 3.5 M7 5.5 L15.5 5.5 M7 7.5 L15.5 7.5" stroke="#e4e4e4" stroke-width="1"/></svg>


<!-- adjustments icons -->
<svg class="a" style="left:600px;top:250px" width="160" height="85" viewBox="600 250 160 85">
<defs>
<linearGradient id="gb" x1="0" y1="0" x2="1" y2="1"><stop offset="0" stop-color="#4a4a4a"/><stop offset="1" stop-color="#cfcfcf"/></linearGradient>
<linearGradient id="gh" x1="0" y1="0" x2="1" y2="0"><stop offset="0" stop-color="#222"/><stop offset="1" stop-color="#ddd"/></linearGradient>
</defs>
<g fill="#c8c8c8" stroke="none">
<circle cx="633.5" cy="266" r="4.5" fill="#888" stroke="#d8d8d8" stroke-width="1.5"/>
<path d="M633.5 257.5 L633.5 259.5 M633.5 272.5 L633.5 274.5 M625 266 L627 266 M640 266 L642 266 M627.5 260 L629 261.5 M638 270.5 L639.5 272 M639.5 260 L638 261.5 M629 270.5 L627.5 272" stroke="#d8d8d8" stroke-width="1.8"/>
<path d="M648.5 271.5 L648.5 266 L650 266 L650.5 263 L652 264 L653 260 L654.5 263 L655.5 259 L657 262 L658 258 L659.5 263 L661 261 L662 264 L663.5 262 L664.5 265 L666 264 L667 266 L667.5 271.5Z"/>
<rect x="673.5" y="260.5" width="17" height="12" fill="#5a5a5a" stroke="#c8c8c8" stroke-width="1.2"/>
<path d="M677 264.5 L690 264.5 M677 268.5 L690 268.5 M679 261 L679 272 M684 261 L684 272" stroke="#9a9a9a" stroke-width="0.8"/>
<path d="M674 272 Q682 272 683 266 Q684 260 690 260" fill="none" stroke="#e8e8e8" stroke-width="1.4"/>
<rect x="697.5" y="260.5" width="16.5" height="12.5" fill="url(#gb)" stroke="#cfcfcf" stroke-width="1.2"/>
<path d="M698 273 L714 261" stroke="#dedede" stroke-width="1"/>
<path d="M700 265 L705 265 M702.5 262.5 L702.5 267.5 M707 270 L712 270" stroke="#f0f0f0" stroke-width="1.5"/>
<path d="M721.5 259 L738 259 L729.8 274Z" fill="#a0a0a0" stroke="#cfcfcf" stroke-width="1"/>
<circle cx="729.8" cy="264" r="3" fill="#777"/>
<rect x="614" y="287.5" width="16" height="12" fill="#6a6a6a" stroke="#cfcfcf" stroke-width="1.2"/>
<rect x="614.5" y="294" width="15" height="5.5" fill="url(#gh)"/>
<path d="M618 288 L618 293 M622 288 L622 293 M626 288 L626 293" stroke="#ddd" stroke-width="1.2"/>
<path d="M646 284 L646 299 M638 287 L654 287 M641 299 L651 299" stroke="#d0d0d0" stroke-width="1.5"/>
<path d="M637 294 L640 287.5 L643 294Z M649 294 L652 287.5 L655 294Z" fill="none" stroke="#cfcfcf" stroke-width="0.9"/>
<path d="M636.5 294 Q640 299 643.5 294Z M648.5 294 Q652 299 655.5 294Z"/>
<rect x="662.5" y="287.5" width="15" height="12" fill="#ddd" stroke="#cfcfcf" stroke-width="1.2"/>
<rect x="663" y="288" width="7" height="11" fill="#333"/>
<rect x="685" y="286" width="11" height="9" fill="#6a6a6a" stroke="#d0d0d0" stroke-width="1.2"/>
<rect x="687" y="284" width="4" height="2"/>
<circle cx="698" cy="296" r="5.5" fill="#888" stroke="#dcdcdc" stroke-width="1.3"/>
<circle cx="716.5" cy="289.5" r="4.5" fill="#e0e0e0"/>
<circle cx="712.5" cy="296" r="4.5" fill="#c0c0c0"/>
<circle cx="720.5" cy="296" r="4.5" fill="#b0b0b0"/>
<path d="M716.5 291 L716.5 296" stroke="#555" stroke-width="1"/>
<rect x="734.5" y="287.5" width="15.5" height="12.5" fill="#333" stroke="#cfcfcf" stroke-width="1.1"/>
<path d="M734.5 291.5 L750 291.5 M734.5 295.5 L750 295.5 M739.5 287.5 L739.5 300 M744.5 287.5 L744.5 300" stroke="#cfcfcf" stroke-width="1.3"/>
<rect x="626.5" y="313.5" width="15.5" height="13" fill="#8a8a8a" stroke="#d0d0d0" stroke-width="1.2"/>
<path d="M628 322 Q632 314 641 316 Q637 325 628 324Z" fill="#444"/>
<rect x="650" y="313.5" width="15.5" height="13" fill="url(#gb)" stroke="#d0d0d0" stroke-width="1.2"/>
<path d="M650.5 321 L658 314 M656 326 L665 318" stroke="#333" stroke-width="2"/>
<rect x="674" y="313.5" width="16" height="13" fill="#bcbcbc" stroke="#d0d0d0" stroke-width="1.2"/>
<path d="M674.5 321 L678 317 L681 320 L685 315 L690 317 L690 320 L685 318 L681 323 L678 320 L674.5 324Z" fill="#333"/>
<rect x="698" y="313.5" width="16" height="13" fill="#aaa" stroke="#d0d0d0" stroke-width="1.2"/>
<path d="M698.5 314 L706 320 L698.5 326Z M713.5 314 L706 320 L713.5 326Z" fill="#666"/>
<rect x="721.5" y="313.5" width="16" height="13" fill="url(#gh)" stroke="#d0d0d0" stroke-width="1.2"/>
</g>
</svg>

<!-- layers content -->
<div class="a" style="left:583px;top:365px;width:68px;height:18px;background:linear-gradient(#555,#4a4a4a);border:1px solid #3a3a3a;border-radius:3px"></div>
<svg class="a" style="left:587px;top:367px" width="12" height="13" viewBox="0 0 12 13"><circle cx="6.5" cy="5.5" r="3.5" fill="none" stroke="#dcdcdc" stroke-width="1.5"/><path d="M4 8 L1 11.5" stroke="#dcdcdc" stroke-width="1.8"/></svg>
<div class="t" style="left:603px;top:368px;color:#e0e0e0">类型</div>
<svg class="a" style="left:641px;top:368px" width="7" height="11" viewBox="0 0 7 11"><path d="M1 4.5 L3.5 1.5 L6 4.5Z M1 6.5 L3.5 9.5 L6 6.5Z" fill="#c0c0c0"/></svg>
<svg class="a" style="left:665px;top:362px" width="125" height="22" viewBox="665 362 125 22">
<g fill="#d0d0d0">
<rect x="673.5" y="368.5" width="12" height="10" fill="#555" stroke="#d8d8d8" stroke-width="1.2"/>
<path d="M675 377 L678 373 L680 375 L682 372 L684.5 377Z"/>
<circle cx="681" cy="371" r="1.2"/>
<circle cx="703" cy="373.5" r="5.3" fill="#c8c8c8"/>
<path d="M706.5 369.5 A5.3 5.3 0 0 1 703 378.8 L703 373.5Z" fill="#555"/>
<path d="M721 368 L734 368 L734 371.5 L733 370 L728.8 370 L728.8 378 L731 379 L724 379 L726.2 378 L726.2 370 L722 370 L721 371.5Z"/>
<rect x="747.5" y="369.5" width="9" height="8" fill="none" stroke="#d0d0d0" stroke-width="1.2"/>
<rect x="746" y="368" width="3" height="3"/><rect x="755" y="368" width="3" height="3"/><rect x="746" y="376" width="3" height="3"/><rect x="755" y="376" width="3" height="3"/>
<path d="M774 368 L779 368 L781 370 L781 378 L774 378Z" fill="none" stroke="#d0d0d0" stroke-width="1.1"/>
<rect x="769.5" y="372.5" width="7" height="7" fill="#bdbdbd"/>
</g>
</svg>
<div class="a" style="left:804px;top:365px;width:9px;height:18px;background:linear-gradient(#9a9a9a,#9a9a9a 35%,#3a3a3a 35%,#3a3a3a 100%);border:1px solid #303030"></div>
<div class="a" style="left:577px;top:387px;width:240px;height:1px;background:#3a3a3a"></div>
<div class="a" style="left:583px;top:392px;width:107px;height:19px;background:linear-gradient(#555,#4a4a4a);border:1px solid #3a3a3a;border-radius:3px"></div>
<div class="t" style="left:590px;top:396px;color:#e0e0e0">正常</div>
<svg class="a" style="left:681px;top:396px" width="7" height="11" viewBox="0 0 7 11"><path d="M1 4.5 L3.5 1.5 L6 4.5Z M1 6.5 L3.5 9.5 L6 6.5Z" fill="#c0c0c0"/></svg>
<div class="t" style="left:699px;top:395px;color:#c8c8c8">不透明度:</div>
<div class="a" style="left:757px;top:392px;width:55px;height:19px;background:#3c3c3c;border:1px solid #333"></div>
<div class="a" style="left:793px;top:393px;width:19px;height:17px;background:linear-gradient(#666,#555)"></div>
<div class="t" style="left:760px;top:396px;font-size:11px;color:#656565">100%</div>
<svg class="a" style="left:799px;top:399px" width="8" height="5" viewBox="0 0 8 5"><path d="M0 0 L8 0 L4 5Z" fill="#eee"/></svg>
<div class="a" style="left:577px;top:415px;width:240px;height:1px;background:#3a3a3a"></div>
<div class="t" style="left:584px;top:423px;color:#c8c8c8">锁定:</div>
<div class="a" style="left:620px;top:424px;width:12px;height:12px;background:conic-gradient(#ddd 0 25%,#666 0 50%,#ddd 0 75%,#666 0) 0 0/6px 6px;border:1px solid #ccc"></div>
<svg class="a" style="left:636px;top:420px" width="70" height="20" viewBox="636 420 70 20">
<g fill="#cfcfcf">
<path d="M646 432 L656 422 L657.5 423.5 L648 433.5Z"/>
<path d="M640 436 Q643 436 644 433 Q646 430.5 648.5 432 Q648.5 435 646 436.5 Q643 438 640 436Z"/>
<path d="M664.5 429.5 L676.5 429.5 M670.5 423.5 L670.5 435.5" stroke="#d0d0d0" stroke-width="1.3"/>
<path d="M668.5 425 L670.5 422.5 L672.5 425Z M668.5 434 L670.5 436.5 L672.5 434Z M666 427.5 L663.5 429.5 L666 431.5Z M675 427.5 L677.5 429.5 L675 431.5Z"/>
<rect x="687" y="428" width="12" height="9" rx="1"/>
<path d="M689.5 428 L689.5 425.5 Q693 421 696.5 425.5 L696.5 428" fill="none" stroke="#cfcfcf" stroke-width="1.6"/>
</g>
</svg>
<div class="t" style="left:724px;top:424px;color:#c8c8c8">填充:</div>
<div class="a" style="left:757px;top:421px;width:55px;height:19px;background:#3c3c3c;border:1px solid #333"></div>
<div class="a" style="left:793px;top:422px;width:19px;height:17px;background:linear-gradient(#666,#555)"></div>
<div class="t" style="left:760px;top:425px;font-size:11px;color:#656565">100%</div>
<svg class="a" style="left:799px;top:428px" width="8" height="5" viewBox="0 0 8 5"><path d="M0 0 L8 0 L4 5Z" fill="#eee"/></svg>
<div class="a" style="left:577px;top:442px;width:240px;height:2px;background:#3a3a3a"></div>
<div class="a" style="left:577px;top:444px;width:225px;height:132px;background:#474747"></div>
<div class="a" style="left:577px;top:446px;width:225px;height:31px;background:#535353"></div>
<div class="a" style="left:603px;top:446px;width:199px;height:31px;background:#5b627a"></div>
<div class="a" style="left:577px;top:477px;width:225px;height:1px;background:#3c3c3c"></div>
<div class="a" style="left:802px;top:444px;width:15px;height:132px;background:#434343;border-left:1px solid #383838"></div>
<svg class="a" style="left:585px;top:455px" width="14" height="11" viewBox="0 0 14 11"><path d="M1 5.5 Q7 -1 13 5.5 Q7 12 1 5.5Z" fill="#d0d0d0"/><circle cx="7" cy="5.5" r="2.3" fill="#444"/></svg>
<svg class="a" style="left:608px;top:446px" width="38" height="31" viewBox="0 0 38 31">
<rect x="3" y="3" width="32" height="25" fill="#111"/>
<rect x="4" y="4" width="30" height="23" fill="#9ec0da"/>
<path d="M4 10 L8 14 L12 12 L16 15 L22 11 L28 14 L34 12 L34 27 L4 27Z" fill="#7d8aa0"/>
<path d="M4 16 L10 18 L14 16 L20 19 L34 17 L34 27 L4 27Z" fill="#5c6470"/>
<rect x="14" y="18" width="14" height="6" fill="#9fcad6"/>
<path d="M4 12 L7 27 L4 27Z M28 10 L34 8 L34 27 L30 27Z" fill="#4a3c48"/>
<path d="M5 20 L10 19 L12 27 L4 27Z" fill="#6a4a50"/>
<rect x="17" y="22" width="8" height="4" fill="#d8e0d8"/>
<path d="M1 9 L1 1 L9 1 M29 1 L37 1 L37 9 M37 22 L37 30 L29 30 M9 30 L1 30 L1 22" fill="none" stroke="#fff" stroke-width="2"/>
</svg>
<div class="t" style="left:653px;top:456px;font-size:12.5px;color:#f4f4f4">图层 0</div>
<div class="a" style="left:577px;top:576px;width:240px;height:1px;background:#3a3a3a"></div>
<svg class="a" style="left:605px;top:577px" width="190" height="18" viewBox="605 577 190 18">
<g fill="#bdbdbd">
<rect x="615.5" y="583.5" width="10" height="5" rx="2.5" fill="none" stroke="#bdbdbd" stroke-width="1.5"/>
<text x="641" y="592" font-family="Liberation Serif" font-style="italic" font-weight="bold" font-size="14" fill="#d0d0d0">fx</text>
<path d="M653 591 L656 591 L654.5 593Z"/>
<rect x="669" y="581" width="13" height="10"/>
<circle cx="675.5" cy="586" r="2.5" fill="#555"/>
<circle cx="702" cy="586" r="5"/>
<path d="M705.5 582.5 A5 5 0 0 1 702 591 L702 586Z" fill="#555"/>
<path d="M707 591 L710 591 L708.5 593Z"/>
<path d="M723 582 L727 582 L728 583.5 L735 583.5 L735 591 L723 591Z"/>
<path d="M750 581 L762 581 L762 591 L752 591 L752 584" fill="none" stroke="#bdbdbd" stroke-width="1.2"/>
<rect x="752" y="581" width="10" height="10" fill="#bdbdbd"/>
<rect x="748" y="587" width="5" height="5" fill="#555" stroke="#bdbdbd" stroke-width="0.8"/>
<rect x="776" y="583" width="12" height="1.5"/>
<path d="M777 585 L778 592 L786 592 L787 585Z" fill="none" stroke="#bdbdbd" stroke-width="1.2"/>
<path d="M780 586 L780 591 M783 586 L783 591" stroke="#bdbdbd" stroke-width="1"/>
<rect x="780" y="581" width="4" height="2"/>
</g>
</svg>

<!-- dialog -->
<div class="a" style="left:152px;top:127px;width:388px;height:316px;background:linear-gradient(90deg,rgba(130,134,134,0.7),rgba(80,84,84,0.8) 50%,rgba(58,60,60,0.95));border:1px solid #b0b2b2;border-radius:5px 5px 0 0"></div>
<div class="a" style="left:153px;top:128px;width:386px;height:25px;background:linear-gradient(90deg,#2b302f,#2a302e 60%,#333737);border-radius:4px 4px 0 0"></div>
<div class="a" style="left:492px;top:128px;width:43px;height:16px;background:linear-gradient(#555a5b,#3a3e3e 50%,#2e3232);border:1px solid #6a6e6e;border-top:0;border-radius:0 0 3px 3px"></div>
<div class="a" style="left:150px;top:128px;width:40px;height:25px;background:radial-gradient(closest-side,rgba(255,255,255,0.42),rgba(255,255,255,0.2) 60%,rgba(255,255,255,0))"></div>
<div class="t" style="left:157px;top:133px;font-size:13px;color:#151515;-webkit-text-stroke:0.3px #151515">描边</div>
<div class="a" style="left:156px;top:152px;width:380px;height:287px;background:#efefef;border:1px solid #9ea0a0"></div>

<!-- group 1 -->
<div class="a" style="left:167px;top:172px;width:250px;height:81px;border:1px solid #b8b8b8;border-radius:2px"></div>
<div class="a" style="left:186px;top:165px;width:34px;height:14px;background:#efefef"></div>
<div class="t" style="left:191px;top:165px;font-size:13px;color:#1a1a1a">描边</div>
<div class="t" style="left:209px;top:191px;font-size:13px;color:#1a1a1a">宽度(W):</div>
<div class="a" style="left:264px;top:188px;width:78px;height:20px;background:#fff;border:1px solid #c5dcef;border-top-color:#7a9ab8"></div>
<div class="t" style="left:269px;top:192px;font-size:13px;color:#111">5 像素</div>
<div class="t" style="left:232px;top:225px;font-size:13px;color:#1a1a1a">颜色:</div>
<div class="a" style="left:265px;top:221px;width:76px;height:20px;background:#fff;border:1px solid #a8a8a8"></div>

<!-- buttons -->
<div class="a" style="left:432px;top:170px;width:93px;height:20px;background:linear-gradient(#f4fbfe,#e8f6fd 50%,#d6effc 51%,#c6e8fa);border:1px solid #74a9c9;border-radius:2px;box-shadow:inset 0 0 0 1px #f6fcff"></div>
<div class="t" style="left:465px;top:175px;font-size:13px;color:#111">确定</div>
<div class="a" style="left:432px;top:198px;width:93px;height:20px;background:linear-gradient(#fbfbfb,#f6f6f6 50%,#ececec 51%,#e0e0e0);border:1px solid #9a9a9a;border-radius:2px;box-shadow:inset 0 0 0 1px #fefefe"></div>
<div class="t" style="left:465px;top:202px;font-size:13px;color:#111">取消</div>

<!-- group 2 -->
<div class="a" style="left:167px;top:270px;width:250px;height:42px;border:1px solid #b8b8b8;border-radius:2px"></div>
<div class="a" style="left:186px;top:263px;width:34px;height:14px;background:#efefef"></div>
<div class="t" style="left:191px;top:263px;font-size:13px;color:#1a1a1a">位置</div>
<div class="a" style="left:176px;top:291px;width:13px;height:13px;border-radius:50%;background:radial-gradient(circle at 40% 40%,#f8f8f8,#d8d8d8);border:1px solid #a0a0a0"></div>
<div class="t" style="left:193px;top:290px;font-size:13px;color:#1a1a1a">内部(I)</div>
<div class="a" style="left:251px;top:291px;width:13px;height:13px;border-radius:50%;background:radial-gradient(circle at 40% 40%,#f8f8f8,#d8d8d8);border:1px solid #a0a0a0"></div>
<div class="t" style="left:266px;top:290px;font-size:13px;color:#1a1a1a">居中(C)</div>
<div class="a" style="left:328px;top:291px;width:13px;height:13px;border-radius:50%;background:radial-gradient(circle at 40% 40%,#f8f8f8,#dcdcdc);border:1px solid #6a8aa8"></div>
<div class="a" style="left:331px;top:294px;width:7px;height:7px;border-radius:50%;background:radial-gradient(circle at 40% 35%,#8ad0f0,#1f5f90 70%,#1a4870)"></div>
<div class="t" style="left:343px;top:290px;font-size:13px;color:#1a1a1a">居外(U)</div>

<!-- group 3 -->
<div class="a" style="left:167px;top:330px;width:250px;height:97px;border:1px solid #b8b8b8;border-radius:2px"></div>
<div class="a" style="left:186px;top:323px;width:34px;height:14px;background:#efefef"></div>
<div class="t" style="left:191px;top:323px;font-size:13px;color:#1a1a1a">混合</div>
<div class="t" style="left:213px;top:349px;font-size:13px;color:#1a1a1a">模式(M):</div>
<div class="a" style="left:265px;top:344px;width:142px;height:21px;background:#fff;border:1px solid #e6e6e6"></div>
<div class="t" style="left:271px;top:349px;font-size:13px;color:#111">正常</div>
<svg class="a" style="left:394px;top:352px" width="9" height="5" viewBox="0 0 9 5"><path d="M0 0 L9 0 L4.5 5Z" fill="#111"/></svg>
<div class="t" style="left:188px;top:378px;font-size:13px;color:#1a1a1a">不透明度(O):</div>
<div class="a" style="left:265px;top:374px;width:76px;height:20px;background:#fff;border:1px solid #e0e0e0"></div>
<div class="t" style="left:270px;top:378px;font-size:13px;color:#111">100</div>
<div class="t" style="left:347px;top:378px;font-size:13px;color:#1a1a1a">%</div>
<div class="a" style="left:177px;top:405px;width:13px;height:13px;background:linear-gradient(135deg,#dcdcdc,#fafafa);border:1px solid #8f8f8f"></div>
<div class="t" style="left:193px;top:406px;font-size:13px;color:#1a1a1a;letter-spacing:-1px">保留透明区域(P)</div>

</body></html>
